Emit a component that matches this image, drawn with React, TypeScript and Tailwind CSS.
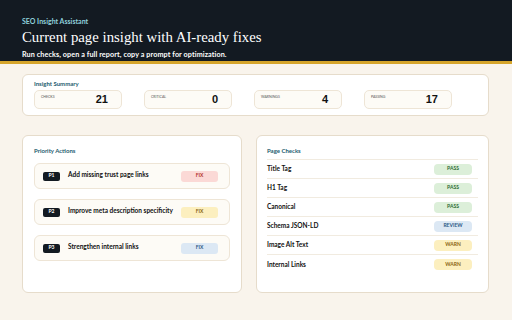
import React from 'react';

const stats = [
  { label: 'Checks', value: '21' },
  { label: 'Critical', value: '0' },
  { label: 'Warnings', value: '4' },
  { label: 'Passing', value: '17' },
];

const actions = [
  { id: 'P1', text: 'Add missing trust page links', pill: 'bg-[#fbd9d6] text-[#b4332b]' },
  { id: 'P2', text: 'Improve meta description specificity', pill: 'bg-[#fcefbf] text-[#8a6410]' },
  { id: 'P3', text: 'Strengthen internal links', pill: 'bg-[#dce8f4] text-[#2c5a86]' },
];

const checks = [
  { name: 'Title Tag', status: 'PASS', pill: 'bg-[#dcefd9] text-[#2d6a32]' },
  { name: 'H1 Tag', status: 'PASS', pill: 'bg-[#dcefd9] text-[#2d6a32]' },
  { name: 'Canonical', status: 'PASS', pill: 'bg-[#dcefd9] text-[#2d6a32]' },
  { name: 'Schema JSON-LD', status: 'REVIEW', pill: 'bg-[#dce8f4] text-[#2c5a86]' },
  { name: 'Image Alt Text', status: 'WARN', pill: 'bg-[#fcefbf] text-[#8a6410]' },
  { name: 'Internal Links', status: 'WARN', pill: 'bg-[#fcefbf] text-[#8a6410]' },
];

export default function App() {
  return (
    <div className="w-[512px] h-[320px] overflow-hidden bg-[#f9f4ec] font-['Lato',sans-serif]">
      <header className="bg-[#131a22] border-b-[3px] border-[#d6a52b] h-[64px] px-[22px] pt-[17px]">
        <div className="text-[7px] font-bold text-[#8fd0dc] leading-[8px]">SEO Insight Assistant</div>
        <h1 className="font-['Liberation_Serif',serif] text-[14.8px] text-white leading-[18px] mt-[3px]">
          Current page insight with AI-ready fixes
        </h1>
        <p className="text-[7.2px] font-bold text-white leading-[8px] mt-[5px] tracking-[0.1px]">
          Run checks, open a full report, copy a prompt for optimization.
        </p>
      </header>

      <div className="px-[22px] pt-[10px]">
        <section className="w-[467px] h-[42px] bg-white border border-[#e6dccb] rounded-[6px] px-[11px] pt-[5px]">
          <div className="text-[6px] font-bold text-[#1d5b6e] leading-[8px]">Insight Summary</div>
          <div className="flex gap-[22px] mt-[2px]">
            {stats.map((s) => (
              <div key={s.label} className="w-[88px] h-[19px] bg-[#fdfbf6] border border-[#eee5d6] rounded-[5px] flex items-center justify-between pl-[6px] pr-[13px]">
                <span className="text-[3.5px] uppercase text-[#555] self-start mt-[4px]">{s.label}</span>
                <span className="font-['Liberation_Sans',sans-serif] font-bold text-[11px] text-[#111]">{s.value}</span>
              </div>
            ))}
          </div>
        </section>

        <div className="flex gap-[14px] mt-[19px]">
          <section className="w-[220px] h-[158px] bg-white border border-[#e6dccb] rounded-[6px] px-[11px] pt-[11px]">
            <div className="text-[6px] font-bold text-[#1d5b6e] leading-[8px]">Priority Actions</div>
            <div className="flex flex-col gap-[10px] mt-[8px]">
              {actions.map((a) => (
                <div key={a.id} className="h-[26px] bg-[#fdfbf6] border border-[#eee5d6] rounded-[6px] flex items-center pl-[8px] pr-[11px]">
                  <span className="w-[17px] h-[9px] bg-[#131a22] rounded-[2px] text-white text-[5px] font-bold flex items-center justify-center">{a.id}</span>
                  <span className="ml-[8px] text-[6.5px] font-bold text-[#111] flex-1 -mt-[2px]">{a.text}</span>
                  <span className={`w-[37px] h-[11px] rounded-[3px] text-[5px] font-bold flex items-center justify-center ${a.pill}`}>FIX</span>
                </div>
              ))}
            </div>
          </section>

          <section className="w-[233px] h-[158px] bg-white border border-[#e6dccb] rounded-[6px] px-[10px] pt-[11px]">
            <div className="text-[6px] font-bold text-[#1d5b6e] leading-[8px]">Page Checks</div>
            <div className="mt-[4px] border-t border-[#f1ebe0]">
              {checks.map((c) => (
                <div key={c.name} className="h-[19px] flex items-center justify-between border-b border-[#f1ebe0] last:border-b-0 pr-[6px]">
                  <span className="text-[6.5px] font-bold text-[#111]">{c.name}</span>
                  <span className={`w-[38px] h-[11px] rounded-[4px] text-[5px] font-bold flex items-center justify-center ${c.pill}`}>{c.status}</span>
                </div>
              ))}
            </div>
          </section>
        </div>
      </div>
    </div>
  );
}
